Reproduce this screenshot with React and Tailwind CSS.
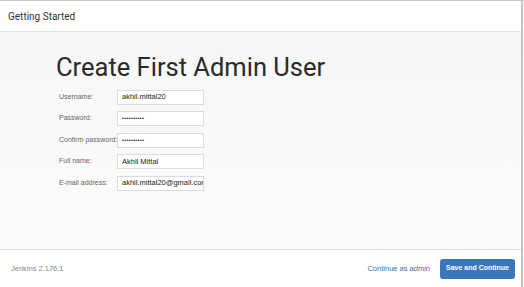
export default function App() {
  const fields = [
    { label: 'Username:', value: 'akhil.mittal20', type: 'text' },
    { label: 'Password:', value: '••••••••••', type: 'pw' },
    { label: 'Confirm password:', value: '••••••••••', type: 'pw' },
    { label: 'Full name:', value: 'Akhil Mittal', type: 'text' },
    { label: 'E-mail address:', value: 'akhil.mittal20@gmail.com', type: 'text' },
  ]

  return (
    <div className="w-[524px] h-[287px] bg-white flex flex-col border-t border-[#c8c8c8] overflow-hidden" style={{ fontFamily: '"Liberation Sans", Arial, sans-serif' }}>
      <div className="flex flex-1 min-h-0">
        <div className="flex-1 flex flex-col border-r-2 border-[#c4c4c4] min-w-0">
          {/* Header */}
          <div className="h-[31px] flex items-center px-[8px] border-b border-[#e4e4e4] bg-white">
            <span className="text-[10px] text-[#333]" style={{ fontFamily: 'Roboto, sans-serif' }}>Getting Started</span>
          </div>

          {/* Body */}
          <div className="flex-1 bg-gradient-to-b from-[#f6f6f6] to-[#fbfbfb] pl-[56px] pt-[23px]">
            <h1 className="text-[25.5px] leading-none font-normal text-[#2a2a2a]" style={{ fontFamily: 'Roboto, sans-serif' }}>
              Create First Admin User
            </h1>
            <div className="mt-[9px] pl-[3px] flex flex-col gap-[6.5px]">
              {fields.map((f) => (
                <div key={f.label} className="flex items-center h-[15px]">
                  <span className="w-[58px] text-[7px] text-[#666] whitespace-nowrap">{f.label}</span>
                  <div className="w-[87px] h-[15px] bg-white border border-[#dcdcdc] flex items-center px-[4px] overflow-hidden">
                    <span className={`text-[#222] whitespace-nowrap ${f.type === 'pw' ? 'text-[5.5px] tracking-[0.3px]' : 'text-[7.5px]'}`}>{f.value}</span>
                  </div>
                </div>
              ))}
            </div>
          </div>

          {/* Footer */}
          <div className="h-[38px] border-t border-[#d8d8d8] bg-white flex items-center pl-[11px] pr-[6px]">
            <span className="text-[7.5px] text-[#888]">Jenkins 2.176.1</span>
            <div className="flex-1" />
            <span className="text-[7.5px] text-[#3a70a8] mr-[10px]">Continue as admin</span>
            <button className="w-[75px] h-[20px] rounded-[3px] bg-[#3a77b9] text-white text-[7px] font-bold flex items-center justify-center">
              Save and Continue
            </button>
          </div>
        </div>
        <div className="w-[1px] bg-white" />
      </div>
    </div>
  )
}
